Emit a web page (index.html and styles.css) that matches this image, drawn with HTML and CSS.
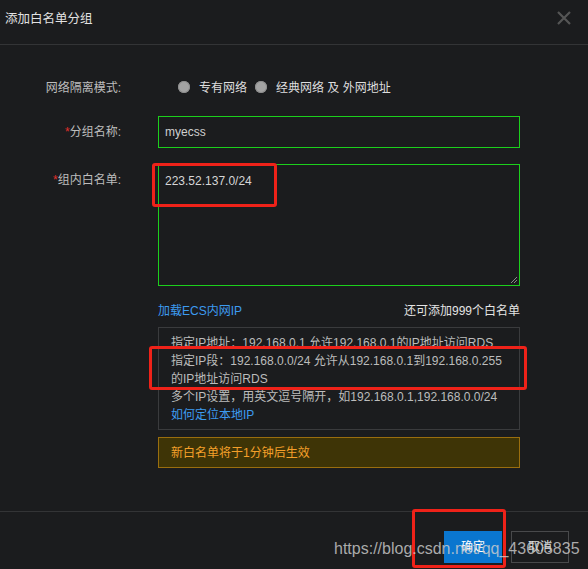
FILE: index.html
```html
<!DOCTYPE html>
<html lang="zh-CN">
<head>
<meta charset="utf-8">
<title>添加白名单分组</title>
<link rel="stylesheet" href="styles.css">
</head>
<body>
<div class="dialog">
  <header class="dlg-head">
    <h1 class="dlg-title">添加白名单分组</h1>
    <span class="dlg-close" aria-label="关闭">
      <svg width="16" height="16" viewBox="0 0 16 16"><path d="M2 2 L14 14 M14 2 L2 14" stroke="#555" stroke-width="2.2" fill="none"/></svg>
    </span>
  </header>

  <div class="dlg-body">
    <div class="form-row row-radio">
      <div class="form-label">网络隔离模式:</div>
      <div class="form-ctrl radios">
        <span class="radio"></span><span class="radio-text">专有网络</span>
        <span class="radio"></span><span class="radio-text">经典网络 及 外网地址</span>
      </div>
    </div>

    <div class="form-row row-input">
      <div class="form-label"><span class="req">*</span>分组名称:</div>
      <div class="form-ctrl"><div class="input">myecss</div></div>
    </div>

    <div class="form-row row-area">
      <div class="form-label"><span class="req">*</span>组内白名单:</div>
      <div class="form-ctrl">
        <div class="textarea">223.52.137.0/24
          <svg class="grip" width="8" height="8" viewBox="0 0 8 8"><path d="M7 1 L1 7 M7 4 L4 7" stroke="#8a8a8a" stroke-width="1" fill="none"/></svg>
        </div>
        <div class="link-row">
          <span class="link">加载ECS内网IP</span>
          <span class="remain">还可添加999个白名单</span>
        </div>
        <div class="info">
          <div>指定IP地址：192.168.0.1 允许192.168.0.1的IP地址访问RDS</div>
          <div>指定IP段：192.168.0.0/24 允许从192.168.0.1到192.168.0.255</div>
          <div>的IP地址访问RDS</div>
          <div>多个IP设置，用英文逗号隔开，如192.168.0.1,192.168.0.0/24</div>
          <div class="link">如何定位本地IP</div>
        </div>
        <div class="warn">新白名单将于1分钟后生效</div>
      </div>
    </div>
  </div>

  <footer class="dlg-foot">
    <span class="btn btn-primary">确定</span>
    <span class="btn btn-default">取消</span>
  </footer>

  <div class="mark mark-1"></div>
  <div class="mark mark-2"></div>
  <div class="mark mark-3"></div>
  <div class="watermark">https://blog.csdn.net/qq_43605835</div>
</div>
</body>
</html>
```

FILE: styles.css
```css
* { box-sizing: border-box; }
html, body { margin: 0; padding: 0; background: #1b1c1e; }
body {
  font-family: "Liberation Sans", "Noto Sans CJK SC", sans-serif;
  font-size: 12px;
  line-height: 18px;
  color: #c8c8c8;
}
.dialog {
  position: relative;
  width: 588px;
  height: 569px;
  background: #1b1c1e;
  overflow: hidden;
}
.dlg-head {
  height: 45px;
  border-bottom: 1px solid #333436;
  display: flex;
  justify-content: space-between;
  align-items: flex-start;
  padding: 10px 16px 0 5px;
}
.dlg-title {
  margin: 0;
  font-size: 12.5px;
  font-weight: normal;
  line-height: 18px;
  color: #e2e2e2;
}
.dlg-close { display: block; width: 16px; height: 16px; }
.dlg-close svg { display: block; }

.dlg-body {
  padding: 31px 0 43px 0;
}
.form-row {
  display: grid;
  grid-template-columns: 121px 362px;
  column-gap: 37px;
}
.form-label {
  text-align: right;
  color: #bdbdbd;
  white-space: nowrap;
}
.req { color: #e0302c; }
.row-radio { height: 24px; align-items: center; }
.row-input { margin-top: 16px; align-items: center; }
.row-area { margin-top: 16px; align-items: start; }
.row-area .form-label { padding-top: 7px; }

.radios {
  display: flex;
  align-items: center;
  padding-left: 20px;
}
.radio {
  width: 12px;
  height: 12px;
  border-radius: 50%;
  background: #a3a3a3;
  box-shadow: inset 0 0 0 1px #8c8c8c;
  margin-right: 9px;
  margin-top: -2px;
}
.radio-text { color: #dedede; margin-right: 8px; }

.input {
  height: 32px;
  border: 1px solid #1ccf1c;
  padding: 6px 6px;
  color: #cfcfcf;
}
.textarea {
  position: relative;
  height: 122px;
  border: 1px solid #1ccf1c;
  padding: 7px 6px;
  color: #d6d6d6;
}
.grip { position: absolute; right: 1px; bottom: 1px; }

.link-row {
  margin-top: 16px;
  display: flex;
  justify-content: space-between;
}
.link { color: #3d9bf0; }
.remain { color: #e4e4e4; }

.info {
  margin-top: 7px;
  border: 1px solid #3a3b3d;
  padding: 6px 12px 5px 12px;
  color: #bcbcbc;
  white-space: nowrap;
}
.warn {
  margin-top: 7px;
  height: 31px;
  border: 1px solid #9a6e0e;
  background: #3e3406;
  color: #f5a02a;
  padding: 6px 12px;
}

.dlg-foot {
  border-top: 1px solid #333436;
  display: flex;
  justify-content: flex-end;
  gap: 9px;
  padding: 19px 19px 0 0;
}
.btn {
  width: 58px;
  height: 32px;
  display: flex;
  align-items: center;
  justify-content: center;
  font-size: 12px;
}
.btn-primary { background: #0a76cf; color: #ffffff; }
.btn-default { border: 1px solid #48494b; color: #dcdcdc; }

.mark {
  position: absolute;
  border: 3px solid #ef2219;
  border-radius: 3px;
}
.mark-1 { left: 152px; top: 163px; width: 125px; height: 44px; }
.mark-2 { left: 149px; top: 346px; width: 378px; height: 44px; }
.mark-3 { left: 412px; top: 509px; width: 94px; height: 59px; }

.watermark {
  position: absolute;
  left: 334px;
  top: 540px;
  font-family: "Liberation Sans", sans-serif;
  font-size: 16px;
  line-height: 18px;
  color: rgba(205, 205, 205, 0.82);
  white-space: nowrap;
}
```
